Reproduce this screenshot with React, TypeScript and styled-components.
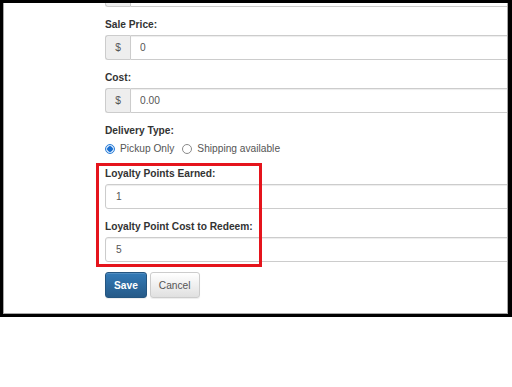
import React from 'react';
import styled, { createGlobalStyle } from 'styled-components';

const GlobalStyle = createGlobalStyle`
  html, body {
    margin: 0;
    padding: 0;
    background: #fff;
  }
  body {
    font-family: "Liberation Sans", Arial, sans-serif;
  }
`;

const Page = styled.div`
  width: 512px;
  height: 387px;
  background: #fff;
`;

const Frame = styled.div`
  box-sizing: border-box;
  width: 512px;
  height: 317px;
  border-style: solid;
  border-color: #000;
  border-width: 3px 4px 3px 3px;
  display: flex;
`;

const Viewport = styled.div`
  flex: 1;
  border: 1px solid #a8a8a8;
  border-top: 0;
  overflow: hidden;
  background: #fff;
`;

const Form = styled.form`
  padding-left: 101px;
  width: 440px;
  color: #333;
  font-size: 10.2px;
`;

const Group = styled.div<{ $clipped?: boolean }>`
  margin-bottom: 10px;
  margin-top: ${(p) => (p.$clipped ? '-21px' : '0')};
`;

const Label = styled.label`
  display: block;
  font-weight: bold;
  line-height: 15px;
  margin-bottom: 3px;
  color: #333;
`;

const InputGroup = styled.div`
  display: flex;
  height: 25px;
`;

const Addon = styled.span`
  box-sizing: border-box;
  width: 25px;
  flex: none;
  display: flex;
  align-items: center;
  justify-content: center;
  background: #eee;
  border: 1px solid #ccc;
  border-right: 0;
  border-radius: 3px 0 0 3px;
  color: #555;
`;

const Input = styled.input<{ $attached?: boolean }>`
  box-sizing: border-box;
  flex: 1;
  width: 100%;
  height: 25px;
  margin: 0;
  padding: 0 ${(p) => (p.$attached ? '9px' : '10px')};
  border: 1px solid #ccc;
  border-radius: ${(p) => (p.$attached ? '0 3px 3px 0' : '3px')};
  box-shadow: inset 0 1px 1px rgba(0, 0, 0, 0.075);
  font-family: inherit;
  font-size: 10.2px;
  color: #555;
  outline: none;
`;

const RadioRow = styled.div`
  display: flex;
  align-items: center;
  height: 15px;
  color: #555;
`;

const RadioOption = styled.label`
  display: flex;
  align-items: center;
  gap: 5px;
  margin-right: 8px;
  line-height: 15px;
`;

const RadioDot = styled.span<{ $checked?: boolean }>`
  box-sizing: border-box;
  width: 10px;
  height: 10px;
  border-radius: 50%;
  border: 1px solid ${(p) => (p.$checked ? '#2b7fd8' : '#8a8a8a')};
  background: ${(p) =>
    p.$checked ? 'radial-gradient(circle, #1a6fd0 0 2.5px, #cfe3fa 3px)' : '#fff'};
`;

const Highlight = styled.div`
  position: relative;
  &::after {
    content: '';
    position: absolute;
    left: -9px;
    top: -3px;
    bottom: -5px;
    width: 166px;
    box-sizing: border-box;
    border: 3px solid #e5141c;
    pointer-events: none;
  }
`;

const Actions = styled.div`
  display: flex;
  gap: 3px;
`;

const Button = styled.button<{ $primary?: boolean }>`
  box-sizing: border-box;
  height: 26px;
  padding: 0 8px;
  border-radius: 3px;
  font-family: inherit;
  font-size: 10.2px;
  font-weight: ${(p) => (p.$primary ? 'bold' : 'normal')};
  color: ${(p) => (p.$primary ? '#fff' : '#555')};
  border: 1px solid ${(p) => (p.$primary ? '#245580' : '#ccc')};
  background: ${(p) =>
    p.$primary
      ? 'linear-gradient(to bottom, #337ab7 0%, #265a88 100%)'
      : 'linear-gradient(to bottom, #fff 0%, #e0e0e0 100%)'};
  box-shadow: inset 0 1px 0 rgba(255, 255, 255, 0.15), 0 1px 1px rgba(0, 0, 0, 0.075);
`;

export default function App() {
  return (
    <Page>
      <GlobalStyle />
      <Frame>
        <Viewport>
          <Form onSubmit={(e) => e.preventDefault()}>
            {/* field scrolled mostly out of view */}
            <Group $clipped>
              <InputGroup>
                <Addon />
                <Input $attached readOnly />
              </InputGroup>
            </Group>

            <Group>
              <Label>Sale Price:</Label>
              <InputGroup>
                <Addon>$</Addon>
                <Input $attached defaultValue="0" />
              </InputGroup>
            </Group>

            <Group>
              <Label>Cost:</Label>
              <InputGroup>
                <Addon>$</Addon>
                <Input $attached defaultValue="0.00" />
              </InputGroup>
            </Group>

            <Group>
              <Label>Delivery Type:</Label>
              <RadioRow>
                <RadioOption>
                  <RadioDot $checked />
                  Pickup Only
                </RadioOption>
                <RadioOption>
                  <RadioDot />
                  Shipping available
                </RadioOption>
              </RadioRow>
            </Group>

            <Highlight>
              <Group>
                <Label>Loyalty Points Earned:</Label>
                <Input defaultValue="1" />
              </Group>
              <Group>
                <Label>Loyalty Point Cost to Redeem:</Label>
                <Input defaultValue="5" />
              </Group>
            </Highlight>

            <Actions>
              <Button $primary type="submit">Save</Button>
              <Button type="button">Cancel</Button>
            </Actions>
          </Form>
        </Viewport>
      </Frame>
    </Page>
  );
}
